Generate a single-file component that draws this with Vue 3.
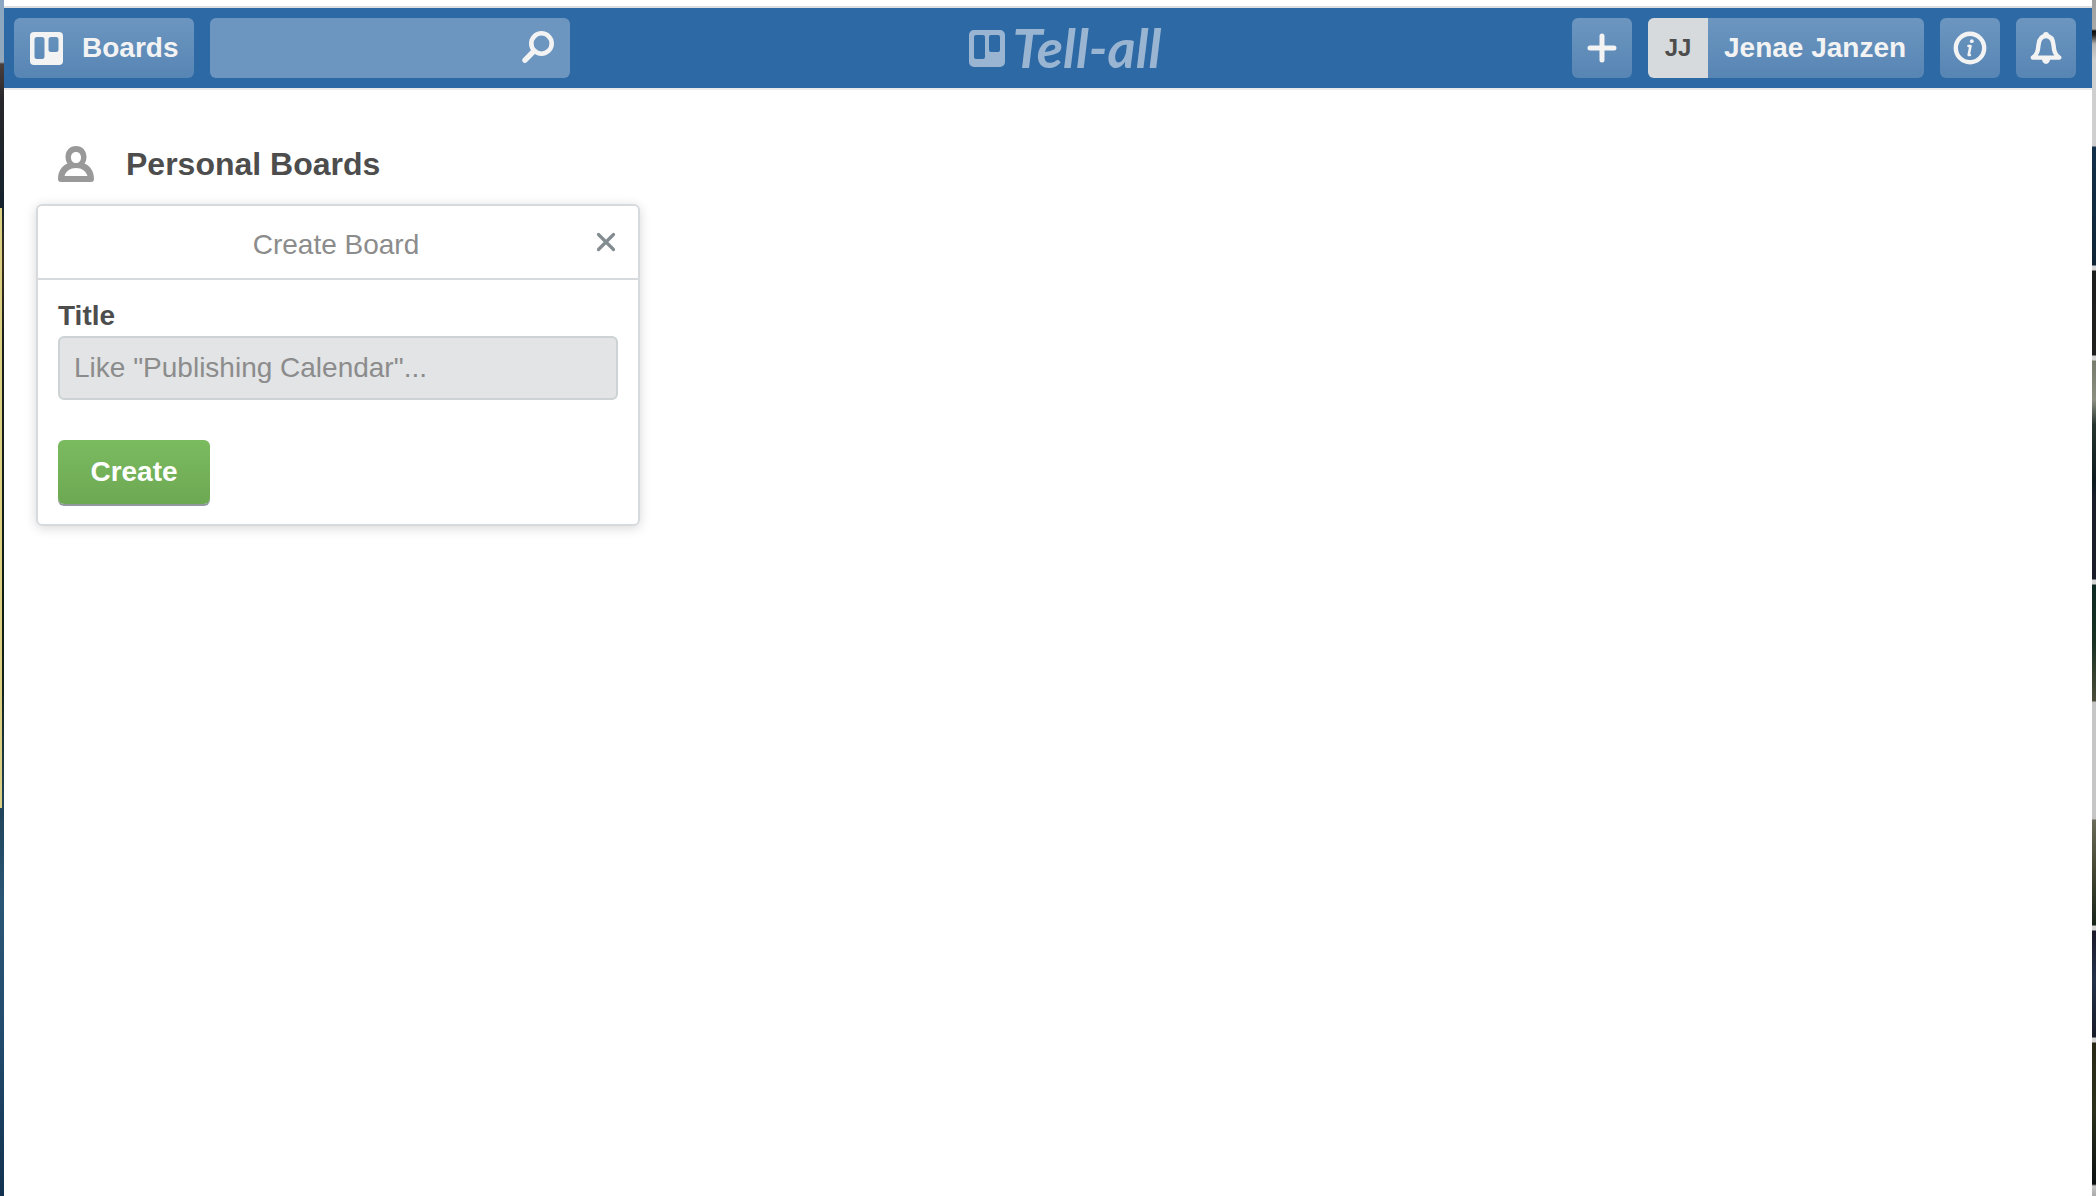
<script setup>
import { ref } from 'vue'

const query = ref('')
const title = ref('')
</script>

<template>
  <div class="desktop">
    <div class="edge edge-left"><div class="note"></div></div>
    <div class="window">
      <header class="topbar">
        <div class="group">
          <button class="btn boards" type="button">
            <svg width="33" height="33" viewBox="0 0 33 33" aria-hidden="true">
              <path fill="currentColor" fill-rule="evenodd" d="M4 0h25a4 4 0 0 1 4 4v25a4 4 0 0 1-4 4H4a4 4 0 0 1-4-4V4a4 4 0 0 1 4-4zM7 5a2.500 2.500 0 0 0-2.500 2.500v17A2.500 2.500 0 0 0 7 27h5a2.500 2.500 0 0 0 2.500-2.500v-17A2.500 2.500 0 0 0 12 5zM21 5a2.500 2.500 0 0 0-2.500 2.500v10A2.500 2.500 0 0 0 21 20h5a2.500 2.500 0 0 0 2.500-2.500v-10A2.500 2.500 0 0 0 26 5z" />
            </svg>
            <span>Boards</span>
          </button>
          <form class="search" role="search" @submit.prevent>
            <input v-model="query" type="text" aria-label="Search" />
            <button type="submit" aria-label="Search">
              <svg width="32" height="32" viewBox="0 0 32 32" aria-hidden="true">
                <circle cx="19.500" cy="12.500" r="10.200" fill="none" stroke="currentColor" stroke-width="4.600" />
                <path d="M12 20L3 29.200" stroke="currentColor" stroke-width="5.400" stroke-linecap="round" />
              </svg>
            </button>
          </form>
        </div>

        <a class="logo" href="#">
          <svg width="36" height="37" viewBox="0 0 36 37" aria-hidden="true">
            <path fill="currentColor" fill-rule="evenodd" d="M5 0h26a5 5 0 0 1 5 5v27a5 5 0 0 1-5 5H5a5 5 0 0 1-5-5V5a5 5 0 0 1 5-5zM7 5a2 2 0 0 0-2 2v20a2 2 0 0 0 2 2h7a2 2 0 0 0 2-2V7a2 2 0 0 0-2-2zM22 5a2 2 0 0 0-2 2v13a2 2 0 0 0 2 2h7a2 2 0 0 0 2-2V7a2 2 0 0 0-2-2z" />
          </svg>
          <span>Tell-all</span>
        </a>

        <div class="group group-right">
          <button class="btn icon" type="button" aria-label="Create">
            <svg width="30" height="30" viewBox="0 0 30 30" aria-hidden="true">
              <path d="M15 3v24M3 15h24" stroke="currentColor" stroke-width="5" stroke-linecap="round" />
            </svg>
          </button>
          <button class="btn member" type="button">
            <span class="avatar">JJ</span>
            <span class="name">Jenae Janzen</span>
          </button>
          <button class="btn icon" type="button" aria-label="Information">
            <svg width="34" height="34" viewBox="0 0 34 34" aria-hidden="true">
              <circle cx="17" cy="17" r="14.200" fill="none" stroke="currentColor" stroke-width="4.400" />
              <path d="M15.500 15h2l-1.800 9h1.200" fill="none" stroke="currentColor" stroke-width="2.600" stroke-linecap="round" stroke-linejoin="round" />
              <circle cx="18.800" cy="10.200" r="1.900" fill="currentColor" />
            </svg>
          </button>
          <button class="btn icon" type="button" aria-label="Notifications">
            <svg width="32" height="34" viewBox="0 0 32 34" aria-hidden="true">
              <path d="M2.800 26.600C7.500 23.500 8 19 8.500 14C9 8.500 11.500 5 16 5s7 3.500 7.500 9c.5 5 1 9.500 5.700 12.600z" fill="none" stroke="currentColor" stroke-width="4.400" stroke-linejoin="round" />
              <path d="M13 4a3 3 0 0 1 6 0zM12 28a4 5 0 0 0 8 0z" fill="currentColor" />
            </svg>
          </button>
        </div>
      </header>

      <main>
        <h1>
          <svg width="36" height="36" viewBox="0 0 36 36" aria-hidden="true">
            <path fill="currentColor" fill-rule="evenodd" d="M18 0c6.200 0 10.500 4.500 10.500 11 0 2.600-.7 4.800-2 6.500C32.500 20 36 25.500 36 33c0 2-1 3-3 3H3c-2 0-3-1-3-3 0-7.500 3.500-13 9.500-15.500-1.300-1.700-2-3.900-2-6.500C7.500 4.500 11.800 0 18 0zm0 6c-3 0-5 2.200-5 5.400s2 5.600 5 5.600 5-2.400 5-5.600S21 6 18 6zM6.500 30h23c-1.500-5-5.500-8-11.500-8s-10 3-11.500 8z" />
          </svg>
          <span>Personal Boards</span>
        </h1>

        <section class="popover" aria-labelledby="popover-title">
          <div class="popover-head">
            <h2 id="popover-title">Create Board</h2>
            <button class="close" type="button" aria-label="Close">
              <svg width="20" height="20" viewBox="0 0 20 20" aria-hidden="true">
                <path d="M2.500 2.500l15 15M17.500 2.500l-15 15" stroke="currentColor" stroke-width="3.200" stroke-linecap="round" />
              </svg>
            </button>
          </div>
          <form class="popover-body" @submit.prevent>
            <label for="board-title">Title</label>
            <input id="board-title" v-model="title" type="text" placeholder="Like &quot;Publishing Calendar&quot;..." />
            <button class="create" type="submit">Create</button>
          </form>
        </section>
      </main>
    </div>
    <div class="edge edge-right"></div>
  </div>
</template>

<style>
body {
  margin: 0;
}
</style>

<style scoped>
* {
  box-sizing: border-box;
}
.desktop {
  display: flex;
  min-height: 100vh;
  font-family: "Liberation Sans", Arial, sans-serif;
  font-size: 28px;
  line-height: 32px;
  color: #4d4d4d;
}
button,
input {
  margin: 0;
  padding: 0;
  border: 0;
  font: inherit;
  color: inherit;
}
svg {
  display: block;
  flex: none;
}
.edge {
  flex: 0 0 4px;
}
.edge-left {
  padding-top: 208px;
  background: linear-gradient(#8aa7c2 0, #93a9bb 62px, #4a3f3b 64px, #26262b 100px, #15232d 208px, #3a2c1e 260px, #161c1c 340px, #0c1a14 600px, #101e18 680px, #1f4257 800px, #2a5675 900px, #224a6c 1040px, #12324f 1196px);
}
.note {
  width: 2px;
  height: 600px;
  background: #dbcf83;
}
.edge-right {
  background: linear-gradient(#a0a0a0 0, #a8a8a8 29px, #0c0c0c 31px, #222 35px, #b4b4b4 44px, #cfcfcf 60px, #cfcfcf 146px, #123049 147px, #0f2537 265px, #d5d5d5 266px, #d5d5d5 270px, #1c1d1d 271px, #20201e 355px, #d5d5d5 356px, #d5d5d5 360px, #777c6e 361px, #8b8f81 400px, #27342e 425px, #0e1a1f 480px, #1b1e29 500px, #1a1c28 579px, #d5d5d5 580px, #d5d5d5 584px, #0d2923 585px, #173022 640px, #4c4c3a 701px, #c6c6c6 702px, #c6c6c6 819px, #6b6b5a 820px, #454733 870px, #17251a 925px, #d5d5d5 926px, #d5d5d5 930px, #1c1b2a 931px, #243149 980px, #171c27 1037px, #d5d5d5 1038px, #d5d5d5 1042px, #292817 1043px, #2a311b 1110px, #0c1013 1184px, #c6c6c6 1186px, #aaa 1196px);
}
.window {
  flex: 1;
  min-width: 0;
  padding-top: 6px;
  background: #fff;
}
.topbar {
  display: grid;
  grid-template-columns: 1fr auto 1fr;
  align-items: center;
  height: 82px;
  padding: 0 16px 0 10px;
  border-top: 2px solid #dcdee0;
  background: #2d69a4;
  box-shadow: 0 2px 0 #ebebeb;
}
.group {
  display: flex;
  gap: 16px;
}
.group-right {
  justify-content: flex-end;
}
.btn {
  display: flex;
  align-items: center;
  height: 60px;
  border-radius: 6px;
  background: linear-gradient(#6c96c0, #5785b4);
  color: #f3f3f3;
  font-weight: bold;
  cursor: pointer;
}
.boards {
  gap: 19px;
  width: 180px;
  padding-left: 16px;
}
.icon {
  justify-content: center;
  width: 60px;
}
.search {
  display: flex;
  align-items: center;
  width: 360px;
  height: 60px;
  border-radius: 6px;
  background: #6c96bf;
  color: #f3f3f3;
}
.search input {
  flex: 1;
  min-width: 0;
  height: 60px;
  padding: 0 16px;
  background: none;
  outline: 0;
}
.search button {
  padding: 0 16px 2px 0;
  background: none;
}
.member {
  gap: 16px;
  width: 276px;
  overflow: hidden;
}
.avatar {
  width: 60px;
  height: 60px;
  background: #d6dadc;
  color: #4d4d4d;
  font-size: 24px;
  line-height: 60px;
  text-align: center;
}
.logo {
  display: flex;
  align-items: center;
  gap: 8px;
  padding-left: 40px;
  color: #99b5d2;
  text-decoration: none;
}
.logo span {
  font-family: Lato, sans-serif;
  font-size: 54px;
  font-style: italic;
  font-weight: 700;
  line-height: 56px;
}
main {
  padding: 56px 32px 0;
}
h1 {
  display: flex;
  align-items: center;
  gap: 32px;
  margin: 0 0 20px;
  padding-left: 22px;
  font-size: 32px;
  line-height: 40px;
}
h1 svg {
  color: #999;
}
.popover {
  width: 604px;
  max-width: 100%;
  border: 2px solid #d6dadc;
  border-radius: 6px;
  box-shadow: 0 2px 12px rgba(0, 0, 0, 0.16);
}
.popover-head {
  display: flex;
  align-items: center;
  height: 74px;
  border-bottom: 2px solid #d6dadc;
}
h2 {
  flex: 1;
  margin: 0;
  padding: 6px 0 0 56px;
  color: #8c8c8c;
  font-size: 28px;
  font-weight: normal;
  text-align: center;
}
.close {
  padding: 0 22px 0 18px;
  background: none;
  color: #838c91;
}
.popover-body {
  display: flex;
  flex-direction: column;
  align-items: flex-start;
  padding: 20px;
}
label {
  margin-bottom: 4px;
  font-weight: bold;
}
.popover-body input {
  width: 100%;
  height: 64px;
  padding: 0 14px;
  border: 2px solid #cdd2d4;
  border-radius: 6px;
  background: #e2e4e6;
}
.popover-body input::placeholder {
  color: #8c8c8c;
  opacity: 1;
}
.create {
  width: 152px;
  height: 64px;
  margin-top: 40px;
  border-radius: 6px;
  background: linear-gradient(#7bbb60, #6da852);
  box-shadow: 0 2px 0 #939a9f;
  color: #fff;
  font-weight: bold;
}
</style>
